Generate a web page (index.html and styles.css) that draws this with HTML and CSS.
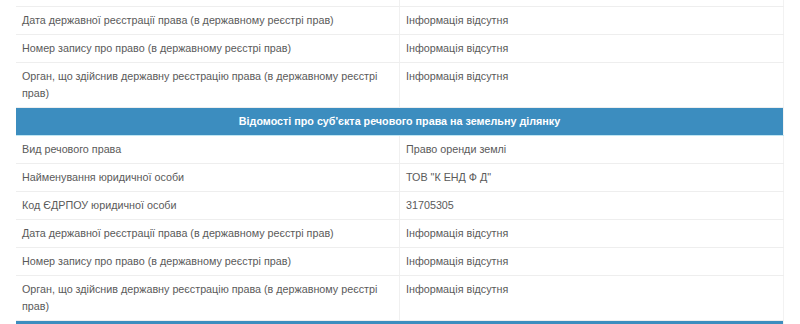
FILE: index.html
```html
<!DOCTYPE html>
<html lang="uk">
<head>
<meta charset="utf-8">
<link rel="stylesheet" href="styles.css">
</head>
<body>
<div class="wrap">
<table class="info">
  <tbody>
    <tr class="spacer"><td></td><td></td></tr>
    <tr><td>Дата державної реєстрації права (в державному реєстрі прав)</td><td>Інформація відсутня</td></tr>
    <tr><td>Номер запису про право (в державному реєстрі прав)</td><td>Інформація відсутня</td></tr>
    <tr><td>Орган, що здійснив державну реєстрацію права (в державному реєстрі прав)</td><td>Інформація відсутня</td></tr>
    <tr class="head"><th colspan="2">Відомості про суб'єкта речового права на земельну ділянку</th></tr>
    <tr><td>Вид речового права</td><td>Право оренди землі</td></tr>
    <tr><td>Найменування юридичної особи</td><td>ТОВ "К ЕНД Ф Д"</td></tr>
    <tr><td>Код ЄДРПОУ юридичної особи</td><td>31705305</td></tr>
    <tr><td>Дата державної реєстрації права (в державному реєстрі прав)</td><td>Інформація відсутня</td></tr>
    <tr><td>Номер запису про право (в державному реєстрі прав)</td><td>Інформація відсутня</td></tr>
    <tr><td>Орган, що здійснив державну реєстрацію права (в державному реєстрі прав)</td><td>Інформація відсутня</td></tr>
    <tr class="head"><th colspan="2">&nbsp;</th></tr>
  </tbody>
</table>
</div>
</body>
</html>
```
FILE: styles.css
```css
html, body {
  margin: 0;
  padding: 0;
  background: #fff;
  overflow: hidden;
}
body {
  font-family: "Liberation Sans", Arial, sans-serif;
  font-size: 10.75px;
  line-height: 17px;
  color: #5a5a5a;
}
.wrap {
  padding: 0 16px;
}
.info {
  width: 768px;
  border-collapse: collapse;
  table-layout: fixed;
  border-right: 1px solid #f2f2f2;
}
.info td {
  width: 50%;
  padding: 5px 6px;
  border-bottom: 1px solid #eee;
  vertical-align: top;
  text-align: left;
}
.info td + td {
  border-left: 1px solid #f0f0f0;
}
.spacer td {
  height: 6px;
  padding: 0;
}
.head th {
  background: #3c8dbf;
  color: #fff;
  font-weight: bold;
  text-align: center;
  padding: 5px 6px;
  border-top: 1px solid #bfe6f3;
  border-bottom: 1px solid #bfe6f3;
}
```
